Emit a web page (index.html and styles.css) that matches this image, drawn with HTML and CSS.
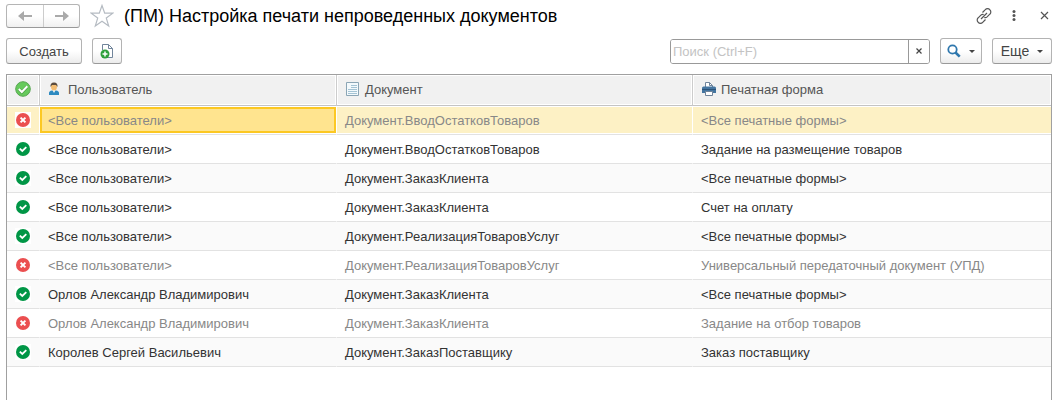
FILE: index.html
```
<!DOCTYPE html>
<html lang="ru">

<head>
    <meta charset="UTF-8">
    <meta name="viewport" content="width=device-width, initial-scale=1.0">
    <title>(ПМ) Настройка печати непроведенных документов</title>
    <link rel="stylesheet" href="styles.css">
</head>

<body>
    <!-- Shared icons -->
    <svg class="sprite" aria-hidden="true">
        <symbol id="icon-on" viewBox="0 0 16 16">
            <circle cx="8" cy="8" r="7" fill="#009646" />
            <path d="M4.8 7.6l2.5 2.4 4-3.9" fill="none" stroke="#fff" stroke-width="1.8" />
        </symbol>
        <symbol id="icon-off" viewBox="0 0 16 16">
            <circle cx="8" cy="8" r="7" fill="#eb4f50" />
            <path d="M5.6 5.6l4.8 4.8M10.4 5.6l-4.8 4.8" stroke="#fff" stroke-width="2" />
        </symbol>
    </svg>

    <header class="title-bar">
        <div class="history">
            <button type="button" aria-label="Назад">
                <svg width="14" height="12" viewBox="0 0 14 12"><path d="M0 6l6-5v4h8v2H6v4z" /></svg>
            </button>
            <button type="button" aria-label="Вперед">
                <svg width="14" height="12" viewBox="0 0 14 12"><path d="M14 6L8 1v4H0v2h8v4z" /></svg>
            </button>
        </div>
        <button type="button" class="icon-btn star" aria-label="В избранное">
            <svg width="24" height="24" viewBox="0 0 24 24"><path d="M12 1.5l2.7 7.7h8.1l-6.5 4.9 2.4 7.9-6.7-4.8L5.3 22l2.4-7.9L1.2 9.2h8.1z" fill="none" stroke="#b5bbc2" stroke-width="1.2" /></svg>
        </button>
        <h1>(ПМ) Настройка печати непроведенных документов</h1>
        <div class="window-actions">
            <button type="button" class="icon-btn" aria-label="Получить ссылку">
                <svg width="16" height="16" viewBox="0 0 16 16" fill="none" stroke="#555" stroke-width="1.2">
                    <path d="M6.5 4.5L9.3 1.7a3 3 0 0 1 4.5 0 3 3 0 0 1 0 4.5l-2.7 2.7q-1.300 1.200-2.800.6M9.500 11.500l-2.800 2.800a3 3 0 0 1-4.500 0 3 3 0 0 1 0-4.500l2.700-2.700q1.300-1.200 2.800-.6M5 11l6-6" />
                </svg>
            </button>
            <button type="button" class="icon-btn" aria-label="Меню">
                <svg width="16" height="16" viewBox="0 0 16 16" fill="#555"><circle cx="8" cy="3.5" r="1.5" /><circle cx="8" cy="7.5" r="1.5" /><circle cx="8" cy="11.5" r="1.5" /></svg>
            </button>
            <button type="button" class="icon-btn" aria-label="Закрыть">
                <svg width="16" height="16" viewBox="0 0 16 16" stroke="#555" stroke-width="1.2"><path d="M5 4l7 7M12 4l-7 7" /></svg>
            </button>
        </div>
    </header>

    <div class="toolbar">
        <button type="button" class="btn btn-create">Создать</button>
        <button type="button" class="btn btn-copy" aria-label="Создать копированием">
            <svg width="16" height="16" viewBox="0 0 16 16">
                <path d="M3.5 7V1.5h6l4 4v9H8" fill="#fff" stroke="#71859b" />
                <path d="M9.5 1.5v4h4" fill="none" stroke="#71859b" />
                <circle cx="6" cy="11" r="4.5" fill="#2fa03c" />
                <path d="M3.5 11h5M6 8.5v5" stroke="#fff" stroke-width="1.5" />
            </svg>
        </button>
        <div class="search">
            <input type="text" placeholder="Поиск (Ctrl+F)" aria-label="Поиск">
            <button type="button" aria-label="Очистить">
                <svg width="8" height="8" viewBox="0 0 8 8" stroke="#444" stroke-width="1.2"><path d="M1.5 1.5l5 5M6.5 1.5l-5 5" /></svg>
            </button>
        </div>
        <button type="button" class="btn btn-find" aria-label="Найти">
            <svg width="14" height="14" viewBox="0 0 14 14" fill="none" stroke="#2f77ad"><circle cx="5.5" cy="5.5" r="4.2" stroke-width="1.8" /><path d="M8.5 8.5l4.2 4.2" stroke-width="2.6" /></svg>
            <span class="caret"></span>
        </button>
        <button type="button" class="btn btn-more">Еще <span class="caret"></span></button>
    </div>

    <main class="list">
        <table>
            <colgroup>
                <col class="col-state">
                <col class="col-user">
                <col class="col-doc">
                <col>
            </colgroup>
            <thead>
                <tr>
                    <th class="state" aria-label="Активность">
                        <svg width="16" height="16" viewBox="0 0 16 16"><circle cx="8" cy="8" r="7.3" fill="#66ca5c" stroke="#58a552" /><path d="M3.8 8.2l3 3 5.5-5.7" fill="none" stroke="#4b9d45" stroke-width="3.2" /><path d="M3.8 8l3 3 5.5-5.7" fill="none" stroke="#fff" stroke-width="2" /></svg>
                    </th>
                    <th>
                        <div class="head user-head">
                            <svg width="12" height="14" viewBox="0 0 12 14">
                                <path d="M1 13v-2q0-2 3-2.5h4q3 .5 3 2.5v2z" fill="#2e8ac0" />
                                <path d="M4.5 8h3L6 11z" fill="#fff" />
                                <ellipse cx="6" cy="4.8" rx="3" ry="3.7" fill="#f3bd72" />
                                <path d="M2.5 5Q2 .5 6 .5T9.500 5L8 3H4z" fill="#5b4c3e" />
                            </svg>
                            Пользователь
                        </div>
                    </th>
                    <th>
                        <div class="head">
                            <svg width="16" height="16" viewBox="0 0 16 16">
                                <path d="M1.5 1.5h12v13h-12z" fill="#f3f9fc" stroke="#8ba5b5" />
                                <path d="M6 4.500h6M6 6.500h6M3 8.500h9M3 10.500h9M3 12.500h9" stroke="#a4c3d4" />
                            </svg>
                            Документ
                        </div>
                    </th>
                    <th>
                        <div class="head">
                            <svg width="16" height="16" viewBox="0 0 16 16">
                                <path d="M4.5 6V1.500h4l3 3V6" fill="#fff" stroke="#71859b" />
                                <path d="M8.500 1.500v3h3" fill="none" stroke="#71859b" />
                                <path d="M2.500 5.500h11q1.500 0 1.500 1.500v5H1V7q0-1.500 1.500-1.500z" fill="#4475a0" />
                                <path d="M1 8.500h14" stroke="#2b5379" />
                                <path d="M4.500 10.500h7v4h-7z" fill="#fff" stroke="#71859b" />
                            </svg>
                            Печатная форма
                        </div>
                    </th>
                </tr>
            </thead>
            <tbody>
                <tr class="inactive selected">
                    <td class="state"><svg role="img" aria-label="Выключено"><use href="#icon-off" /></svg></td>
                    <td class="current">&lt;Все пользователи&gt;</td>
                    <td>Документ.ВводОстатковТоваров</td>
                    <td>&lt;Все печатные формы&gt;</td>
                </tr>
                <tr>
                    <td class="state"><svg role="img" aria-label="Включено"><use href="#icon-on" /></svg></td>
                    <td>&lt;Все пользователи&gt;</td>
                    <td>Документ.ВводОстатковТоваров</td>
                    <td>Задание на размещение товаров</td>
                </tr>
                <tr>
                    <td class="state"><svg role="img" aria-label="Включено"><use href="#icon-on" /></svg></td>
                    <td>&lt;Все пользователи&gt;</td>
                    <td>Документ.ЗаказКлиента</td>
                    <td>&lt;Все печатные формы&gt;</td>
                </tr>
                <tr>
                    <td class="state"><svg role="img" aria-label="Включено"><use href="#icon-on" /></svg></td>
                    <td>&lt;Все пользователи&gt;</td>
                    <td>Документ.ЗаказКлиента</td>
                    <td>Счет на оплату</td>
                </tr>
                <tr>
                    <td class="state"><svg role="img" aria-label="Включено"><use href="#icon-on" /></svg></td>
                    <td>&lt;Все пользователи&gt;</td>
                    <td>Документ.РеализацияТоваровУслуг</td>
                    <td>&lt;Все печатные формы&gt;</td>
                </tr>
                <tr class="inactive">
                    <td class="state"><svg role="img" aria-label="Выключено"><use href="#icon-off" /></svg></td>
                    <td>&lt;Все пользователи&gt;</td>
                    <td>Документ.РеализацияТоваровУслуг</td>
                    <td>Универсальный передаточный документ (УПД)</td>
                </tr>
                <tr>
                    <td class="state"><svg role="img" aria-label="Включено"><use href="#icon-on" /></svg></td>
                    <td>Орлов Александр Владимирович</td>
                    <td>Документ.ЗаказКлиента</td>
                    <td>&lt;Все печатные формы&gt;</td>
                </tr>
                <tr class="inactive">
                    <td class="state"><svg role="img" aria-label="Выключено"><use href="#icon-off" /></svg></td>
                    <td>Орлов Александр Владимирович</td>
                    <td>Документ.ЗаказКлиента</td>
                    <td>Задание на отбор товаров</td>
                </tr>
                <tr>
                    <td class="state"><svg role="img" aria-label="Включено"><use href="#icon-on" /></svg></td>
                    <td>Королев Сергей Васильевич</td>
                    <td>Документ.ЗаказПоставщику</td>
                    <td>Заказ поставщику</td>
                </tr>
            </tbody>
        </table>
    </main>
</body>

</html>
```

FILE: styles.css
```
* {
    margin: 0;
    padding: 0;
    box-sizing: border-box;
}

body {
    display: flex;
    flex-direction: column;
    min-height: 100vh;
    padding: 4px 7px 0 6px;
    background-color: #fff;
    color: #333;
    font-family: "Liberation Sans", Arial, sans-serif;
    font-size: 13px;
}

svg {
    display: block;
}

button,
input {
    font: inherit;
    color: inherit;
}

button {
    cursor: pointer;
}

.sprite {
    position: absolute;
    width: 0;
    height: 0;
}

/* Title bar */
.title-bar {
    display: flex;
    align-items: center;
    height: 24px;
}

.history {
    display: flex;
    height: 24px;
    border: 1px solid #b5b5b5;
    border-bottom-color: #999;
    border-radius: 3px;
    background: linear-gradient(#fff 50%, #f0f0f0);
}

.history button {
    display: flex;
    align-items: center;
    justify-content: center;
    width: 36px;
    border: none;
    background: none;
}

.history button + button {
    border-left: 1px solid #ccc;
}

.history path {
    fill: #aaa;
}

.icon-btn {
    border: none;
    background: none;
}

.star {
    margin: 0 10px;
}

h1 {
    color: #000;
    font-size: 18px;
    font-weight: 400;
    line-height: 24px;
}

.window-actions {
    display: flex;
    gap: 14px;
    margin-left: auto;
}

/* Toolbar */
.toolbar {
    display: flex;
    align-items: center;
    gap: 10px;
    height: 26px;
    margin: 10px 0;
}

.btn {
    display: flex;
    align-items: center;
    justify-content: center;
    gap: 8px;
    height: 26px;
    border: 1px solid #b3b3b3;
    border-bottom-color: #999;
    border-radius: 3px;
    background: linear-gradient(#fff 50%, #ececec);
    color: #444;
    font-size: 14px;
}

.btn-create {
    width: 76px;
    font-size: 13px;
}

.btn-copy {
    width: 30px;
}

.btn-find {
    width: 42px;
}

.btn-more {
    width: 60px;
}

.caret {
    border: 3px solid transparent;
    border-top-color: #444;
    border-bottom: none;
}

.search {
    display: flex;
    width: 260px;
    height: 25px;
    margin-left: auto;
    border: 1px solid #999;
    border-radius: 3px;
    overflow: hidden;
}

.search input {
    flex: 1;
    min-width: 0;
    padding: 0 2px;
    border: none;
    outline: none;
}

.search input::placeholder {
    color: #c3c3c3;
}

.search button {
    display: flex;
    align-items: center;
    justify-content: center;
    width: 21px;
    border: none;
    border-left: 1px solid #999;
    background: #fff;
}

/* List */
.list {
    flex: 1;
    border: 1px solid #a0a0a0;
    border-bottom: none;
}

table {
    width: 100%;
    table-layout: fixed;
    border-collapse: separate;
    border-spacing: 0;
}

.col-state {
    width: 33px;
}

.col-user {
    width: 297px;
}

.col-doc {
    width: 356px;
}

th {
    height: 31px;
    padding: 0 8px 2px;
    border-right: 1px solid #ccc;
    border-bottom: 1px solid #c4c4c4;
    background-color: #f1f1f1;
    box-shadow: inset 0 0 0 1px #fff;
    color: #555;
    font-weight: 400;
    text-align: left;
}

th:last-child,
td:last-child {
    border-right: none;
}

.head {
    display: flex;
    align-items: center;
    gap: 4px;
}

.user-head {
    gap: 8px;
}

td {
    height: 29px;
    padding: 0 8px;
    border-right: 1px solid transparent;
    border-bottom: 1px solid #e2e2e2;
    overflow: hidden;
    text-overflow: ellipsis;
    white-space: nowrap;
}

tbody tr:nth-child(odd) {
    background-color: #fafafa;
}

.inactive td {
    color: #888;
}

.state svg {
    width: 16px;
    height: 16px;
}

td.state svg {
    background-color: #fff;
}

tbody tr.selected {
    background-color: #fff;
}

.selected td {
    background-color: #fdf1c5;
    background-clip: padding-box;
    box-shadow: inset 0 1px #fff, inset 0 -1px #fff;
}

.selected td.current {
    background-color: #ffe48f;
    box-shadow: inset 0 1px #fff, inset 0 -1px #fff,
        inset 0 3px #fcc823, inset 0 -3px #fcc823,
        inset 2px 0 #fcc823, inset -2px 0 #fcc823;
}
```
